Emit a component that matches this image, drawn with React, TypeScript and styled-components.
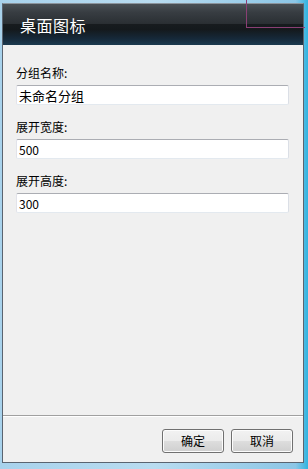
import React from 'react';
import styled, { createGlobalStyle } from 'styled-components';

const GlobalStyle = createGlobalStyle`
    html, body {
        margin: 0;
        padding: 0;
        width: 308px;
        height: 469px;
        overflow: hidden;
        background: #9fcbe6;
    }
    #root {
        height: 469px;
    }
`;

const Frame = styled.div`
    position: relative;
    box-sizing: border-box;
    width: 308px;
    height: 469px;
    padding: 3px 4px 6px 2px;
    background: linear-gradient(90deg, #a8d2ec 0%, #b9dcf0 50%, #8cc6e6 96%, #2fb4e0 100%);
    display: flex;
    flex-direction: column;
`;

const Window = styled.div`
    flex: 1;
    display: flex;
    flex-direction: column;
    border: 1px solid #5a6470;
    border-top-color: #8c949c;
    background: #f0f0f0;
    font-family: "Noto Sans CJK SC", "Liberation Sans", sans-serif;
`;

const TitleBar = styled.div`
    height: 41px;
    display: flex;
    align-items: center;
    padding-left: 17px;
    background: linear-gradient(
        180deg,
        #4a5055 0%,
        #383d42 20%,
        #2a2f33 48%,
        #171b1e 50%,
        #14191c 62%,
        #16293a 85%,
        #1b3a4f 100%
    );
    color: #ffffff;
    font-size: 16px;
    letter-spacing: 0.5px;
`;

const Body = styled.div`
    flex: 1;
    display: flex;
    flex-direction: column;
    padding: 20px 13px 0 13px;
`;

const Field = styled.div`
    display: flex;
    flex-direction: column;
    margin-bottom: 14px;
`;

const Label = styled.label`
    font-size: 12px;
    line-height: 16px;
    color: #000;
    margin-bottom: 4px;
`;

const Input = styled.input<{ $latin?: boolean }>`
    box-sizing: border-box;
    width: 273px;
    height: 20px;
    margin: 0;
    padding: 0 2px;
    border: 1px solid #e3e9ef;
    border-top-color: #abadb3;
    border-left-color: #e2e3ea;
    border-right-color: #dbdfe6;
    border-radius: 2px;
    background: #fff;
    font-family: "Noto Sans CJK SC", "Liberation Sans", sans-serif;
    font-size: ${(p) => (p.$latin ? '12px' : '13px')};
    color: #000;
    outline: none;
`;

const Spacer = styled.div`
    flex: 1;
`;

const Footer = styled.div`
    box-sizing: border-box;
    height: 47px;
    border-top: 1px solid #a0a0a0;
    box-shadow: inset 0 1px 0 #ffffff;
    display: flex;
    justify-content: flex-end;
    align-items: center;
    gap: 7px;
    padding: 3px 10px 0 0;
`;

const Button = styled.button`
    box-sizing: border-box;
    width: 62px;
    height: 24px;
    margin: 0;
    padding: 0;
    border: 1px solid #707070;
    border-radius: 3px;
    background: linear-gradient(180deg, #f2f2f2 0%, #ebebeb 48%, #dddddd 52%, #cfcfcf 100%);
    box-shadow: inset 0 0 0 1px #fcfcfc;
    font-family: "Noto Sans CJK SC", "Liberation Sans", sans-serif;
    font-size: 12px;
    color: #000;
`;

const StrayLine = styled.div`
    position: absolute;
    top: 0;
    left: 246px;
    width: 58px;
    height: 27px;
    border-left: 1px solid #8a3f74;
    border-bottom: 1px solid #8a3f74;
    pointer-events: none;
`;

const App: React.FC = () => {
    return (
        <>
            <GlobalStyle />
            <Frame>
                <Window>
                    <TitleBar>桌面图标</TitleBar>
                    <Body>
                        <Field>
                            <Label>分组名称:</Label>
                            <Input defaultValue="未命名分组" />
                        </Field>
                        <Field>
                            <Label>展开宽度:</Label>
                            <Input $latin defaultValue="500" />
                        </Field>
                        <Field>
                            <Label>展开高度:</Label>
                            <Input $latin defaultValue="300" />
                        </Field>
                        <Spacer />
                    </Body>
                    <Footer>
                        <Button>确定</Button>
                        <Button>取消</Button>
                    </Footer>
                </Window>
                <StrayLine />
            </Frame>
        </>
    );
};

export default App;
